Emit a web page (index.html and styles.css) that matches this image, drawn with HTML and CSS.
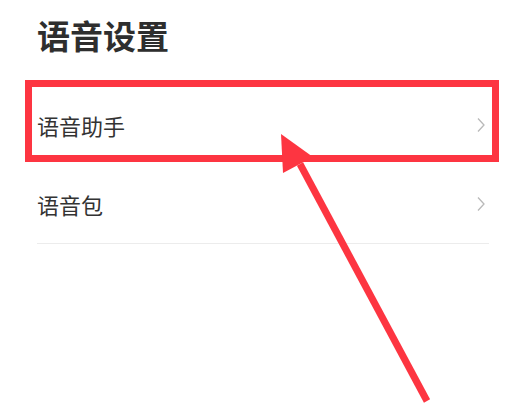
FILE: index.html
```html
<!DOCTYPE html>
<html lang="zh">
<head>
<meta charset="utf-8">
<link rel="stylesheet" href="styles.css">
</head>
<body>
<div class="page">
  <h1 class="title">语音设置</h1>
  <ul class="list">
    <li class="row">
      <span class="label">语音助手</span>
      <svg class="chev" width="10" height="16" viewBox="0 0 10 16"><path d="M2 1.5 L8 8 L2 14.5" fill="none" stroke="#b9b9b9" stroke-width="1.3"/></svg>
    </li>
    <li class="row">
      <span class="label">语音包</span>
      <svg class="chev" width="10" height="16" viewBox="0 0 10 16"><path d="M2 1.5 L8 8 L2 14.5" fill="none" stroke="#b9b9b9" stroke-width="1.3"/></svg>
    </li>
  </ul>
  <div class="highlight"></div>
  <svg class="arrow" width="505" height="408" viewBox="0 0 505 408">
    <line x1="300" y1="164" x2="427" y2="401" stroke="#fd3541" stroke-width="7" stroke-linecap="butt"/>
    <polygon points="281,134 313,157 283,173" fill="#fd3541"/>
  </svg>
</div>
</body>
</html>
```
FILE: styles.css
```css
html, body {
  margin: 0;
  padding: 0;
  background: #ffffff;
}
.page {
  position: relative;
  width: 505px;
  height: 408px;
  overflow: hidden;
  font-family: "Noto Sans CJK SC", "Noto Sans", sans-serif;
}
.title {
  margin: 0;
  padding: 15px 0 0 37px;
  height: 86px;
  box-sizing: border-box;
  font-size: 33px;
  line-height: 40px;
  font-weight: 700;
  color: #2e2e2e;
}
.list {
  list-style: none;
  margin: 0 16px 0 37px;
  padding: 0;
}
.row {
  display: flex;
  align-items: center;
  justify-content: space-between;
  height: 79px;
  box-sizing: border-box;
  border-bottom: 1px solid #ececec;
  padding-right: 3px;
}
.row:first-child {
  border-bottom-color: transparent;
}
.label {
  font-size: 22px;
  line-height: 30px;
  color: #333333;
}
.chev {
  display: block;
}
.highlight {
  position: absolute;
  left: 25px;
  top: 80px;
  width: 474px;
  height: 82px;
  box-sizing: border-box;
  border: 7px solid #fd3541;
}
.arrow {
  position: absolute;
  left: 0;
  top: 0;
}
```
